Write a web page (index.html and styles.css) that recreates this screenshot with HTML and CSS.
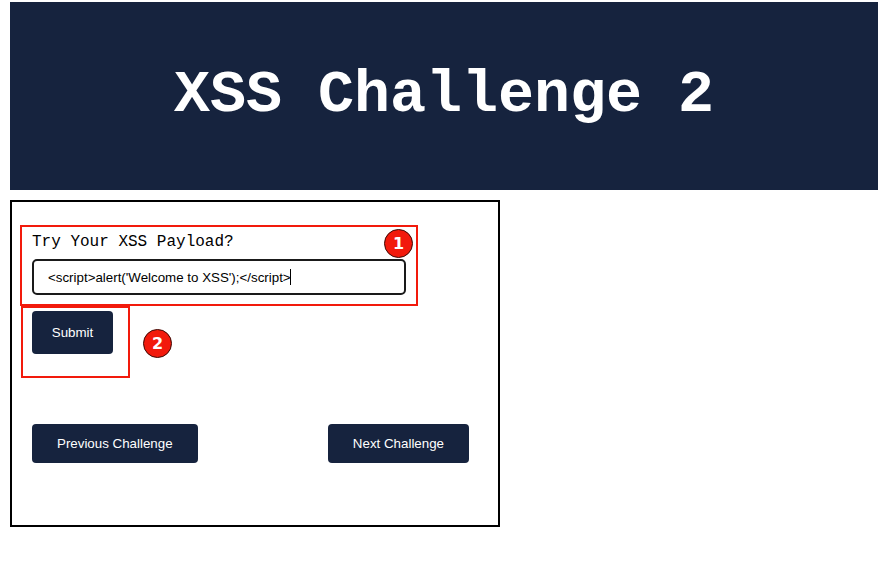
FILE: index.html
```html
<!DOCTYPE html>
<html lang="en">
<head>
  <meta charset="UTF-8">
  <meta name="viewport" content="width=device-width, initial-scale=1.0">
  <title>XSS Challenge 2</title>
  <link rel="stylesheet" href="styles.css">
</head>
<body>
  <!-- Page Banner -->
  <header class="banner">
    <h1>XSS Challenge 2</h1>
  </header>

  <!-- Challenge Box -->
  <div class="challenge-box">
    <form class="payload-form" onsubmit="return false;">
      <label for="payload">Try Your XSS Payload?</label>
      <input type="text" id="payload" value="<script>alert('Welcome to XSS');</script>" autofocus>
      <button type="submit" class="btn btn-submit">Submit</button>
    </form>

    <div class="nav-row">
      <button class="btn btn-nav">Previous Challenge</button>
      <button class="btn btn-nav">Next Challenge</button>
    </div>

    <!-- text cursor after the payload -->
    <span class="caret"></span>

    <!-- Step markers -->
    <div class="mark mark-input"></div>
    <div class="mark mark-submit"></div>
    <span class="step step-1">1</span>
    <span class="step step-2">2</span>
  </div>

  <script>
    // keep the caret at the end of the payload
    const payload = document.getElementById('payload');
    payload.focus();
    payload.setSelectionRange(payload.value.length, payload.value.length);
  </script>
</body>
</html>
```

FILE: styles.css
```css
/* General Styles */
body {
  margin: 0;
  padding: 2px 5px 0 10px;
  font-family: "Liberation Sans", Arial, sans-serif;
  background-color: #fff;
}

/* Banner */
.banner {
  width: 868px;
  height: 188px;
  background-color: #16233e;
  display: flex;
  justify-content: center;
  align-items: center;
}

.banner h1 {
  margin: 0 0 2px 0;
  font-family: "Liberation Mono", "Courier New", monospace;
  font-size: 60px;
  font-weight: bold;
  color: #fff;
}

/* Challenge Box */
.challenge-box {
  position: relative;
  box-sizing: border-box;
  width: 490px;
  height: 327px;
  margin-top: 10px;
  border: 2px solid #000;
  padding: 31px 20px 0 20px;
}

.payload-form {
  display: flex;
  flex-direction: column;
  align-items: flex-start;
}

.payload-form label {
  font-family: "Liberation Mono", "Courier New", monospace;
  font-size: 16px;
  line-height: 18px;
  color: #000;
}

.payload-form input {
  box-sizing: border-box;
  width: 374px;
  height: 36px;
  margin-top: 8px;
  padding: 0 14px;
  border: 2px solid #1a1a1a;
  border-radius: 5px;
  font-family: "Liberation Sans", Arial, sans-serif;
  font-size: 13.33px;
  color: #000;
  caret-color: transparent;
  outline: none;
}

.caret {
  position: absolute;
  left: 278px;
  top: 67px;
  width: 1px;
  height: 16px;
  background-color: #000;
}

/* Buttons */
.btn {
  border: none;
  border-radius: 4px;
  background-color: #16233e;
  color: #fff;
  font-family: "Liberation Sans", Arial, sans-serif;
  font-size: 13.33px;
  cursor: pointer;
}

.btn-submit {
  width: 81px;
  height: 43px;
  margin-top: 16px;
}

.nav-row {
  display: flex;
  justify-content: space-between;
  margin-top: 70px;
  padding-right: 9px;
}

.btn-nav {
  height: 39px;
  padding: 0 25px;
}

/* Step markers */
.mark {
  position: absolute;
  box-sizing: border-box;
  border: 2px solid #f21a0c;
}

.mark-input {
  left: 8px;
  top: 23px;
  width: 398px;
  height: 81px;
}

.mark-submit {
  left: 9px;
  top: 104px;
  width: 109px;
  height: 72px;
}

.step {
  position: absolute;
  box-sizing: border-box;
  width: 29px;
  height: 29px;
  border-radius: 50%;
  border: 1px solid #3a0a05;
  background-color: #f21a0c;
  color: #fff;
  font-family: "DejaVu Sans", sans-serif;
  font-weight: bold;
  font-size: 16px;
  line-height: 27px;
  text-align: center;
}

.step-1 {
  left: 372px;
  top: 27px;
}

.step-2 {
  left: 131px;
  top: 127px;
}
```
